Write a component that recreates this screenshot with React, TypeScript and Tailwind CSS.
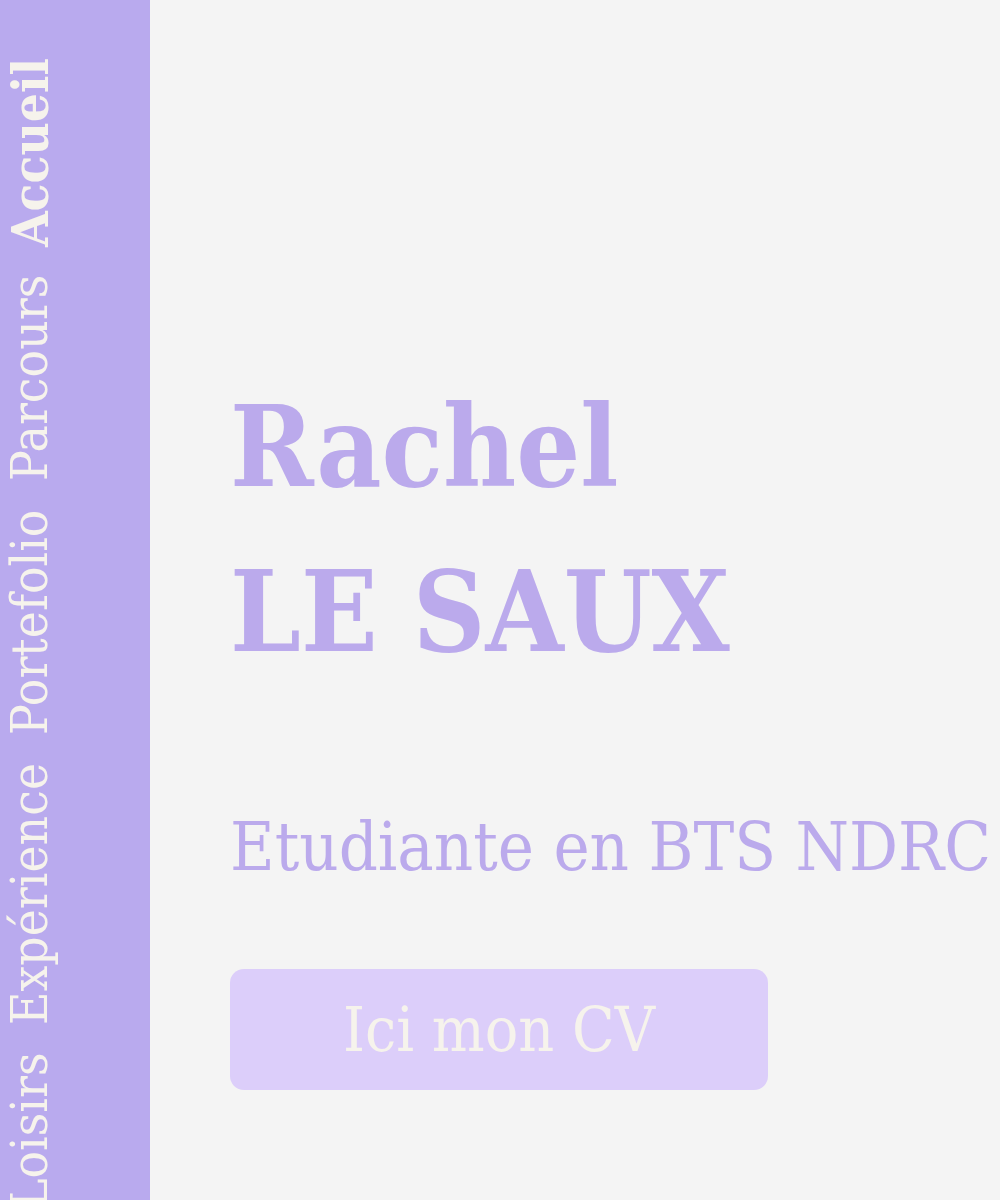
export default function App() {
  const serif = "font-['DejaVu_Serif_Condensed','DejaVu_Serif',serif] [font-stretch:condensed]";
  const nav = ["Loisirs", "Expérience", "Portefolio", "Parcours"];

  return (
    <div className={`flex h-[1200px] w-[1000px] overflow-hidden bg-[#f4f4f4] ${serif}`}>
      {/* sidebar, text reads bottom to top */}
      <aside className="h-full w-[150px] shrink-0 overflow-hidden bg-[#b9aaee]">
        <nav className="flex h-full rotate-180 justify-end gap-[28px] whitespace-nowrap pb-[58px] pr-[2px] text-[51px] leading-[56px] text-[#f6f3ec] [writing-mode:vertical-rl]">
          {nav.map((item) => (
            <a key={item} href="#">{item}</a>
          ))}
          <a href="#" className="font-bold">Accueil</a>
        </nav>
      </aside>

      <main className="flex flex-col pl-[80px] pt-[364px] text-[#bbaaec]">
        <h1 className="text-[112px] font-bold leading-[165px]">
          Rachel
          <br />
          LE SAUX
        </h1>
        <p className="mt-[113px] whitespace-nowrap text-[68px] leading-[80px]">Etudiante en BTS NDRC</p>
        <a
          href="#"
          className="mt-[82px] flex h-[121px] w-[538px] items-center justify-center rounded-[14px] bg-[#dccefa] text-[62px] text-[#f6f3ec]"
        >
          Ici mon CV
        </a>
      </main>
    </div>
  );
}
